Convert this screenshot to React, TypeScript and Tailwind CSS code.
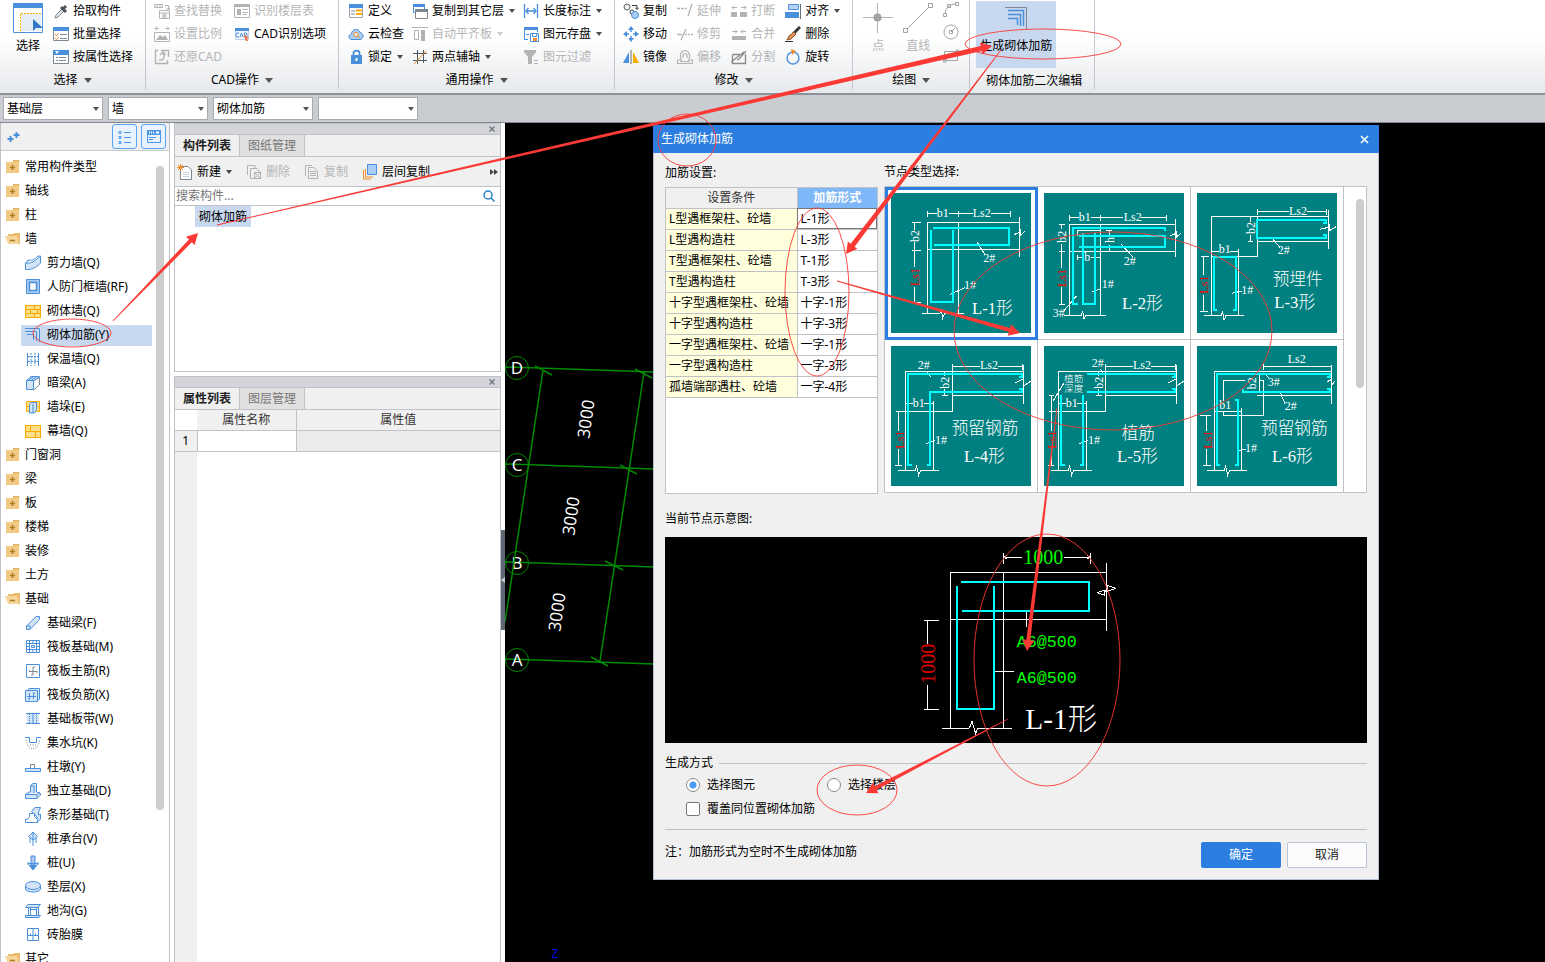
import { useState } from "react"
import type { ReactNode } from "react"

const BLUE = "#4a8fdc"
const PALE = "#d3e4f8"
const GRAY = "#b3b3b3"
const STEEL = "#7d8791"
const AMBER = "#f9ab00"
const SAND = "#ffdf8a"

/** 16x16 icon drawings, keyed by name */
const ICONS: Record<string, ReactNode> = {
  // ribbon
  pick: (
    <>
      <path d="M2 15L3 12L9 6L11 8L5 14Z" fill="#dfe6ec" stroke={STEEL} />
      <path d="M8 4L13 9M10 6L13 3" stroke="#4b5560" strokeWidth="3" />
    </>
  ),
  batch: (
    <>
      <path d="M.5 2.500H15.500V14.500H.500Z" fill="#fff" stroke={STEEL} />
      <path d="M0 1H16V5H0Z" fill={BLUE} />
      <path d="M7 8.500H14M7 12.500H14" stroke={STEEL} />
      <path d="M2 8L3.500 9.500L6 7M2 12L3.500 13.500L6 11" stroke="#f08c2a" />
    </>
  ),
  byprop: (
    <>
      <path d="M.5 2.500H15.500V14.500H.500Z" fill="#fff" stroke={STEEL} />
      <path d="M0 1H16V6H0Z" fill={BLUE} />
      <path d="M2 2H6L4 5Z" fill="#fff" />
      <path d="M3 8.500H5M6 8.500H13M3 11.500H5M6 11.500H13" stroke={STEEL} />
    </>
  ),
  findrep: (
    <>
      <path d="M0.500 1.500H8.500V4.500H.500ZM3 2V4M6 2V4M11 2.500H14.500V6M12 4.500L14.500 7L16 4.500M5.500 7.500H15.500V15.500H5.500ZM6 10H15M8 12H13M8 14H13M10 10V15" stroke={GRAY} />
    </>
  ),
  ratio: (
    <>
      <path d="M.5 6.500H15.500V15.500H.500ZM1 2.500H5M11 2.500H15M3 .500L1 2.500L3 4.500M13 .500L15 2.500L13 4.500" stroke={GRAY} />
      <path d="M2 14L6 9L9 11L11 9L14 14Z" fill={GRAY} />
    </>
  ),
  restore: <path d="M4 1.500H1.500V14.500H13.500V11M7 1.500H14.500V8M5 11C10 12 11 8 9 4M6 6L9 3L12 6" stroke={GRAY} strokeWidth="1.400" />,
  floors: (
    <>
      <path d="M.5 3.500H15.500V14.500H.500Z" stroke={GRAY} />
      <path d="M0 1H16V4H0ZM3 6H7V12H3Z" fill={GRAY} />
      <path d="M8.500 6.500H14M8.500 9.500H14M8.500 11.500H13" stroke={GRAY} />
    </>
  ),
  cadopt: (
    <>
      <path d="M1.500 3.500H14.500V13.500H1.500Z" fill="#eef4fb" stroke="#c2d3e6" />
      <path d="M1 2H15V5H1Z" fill={BLUE} />
      <path d="M5 7H3L2 8V10L3 11H5M6 11L7.500 7L9 11M10.500 7V11H12L13 10V8L12 7Z" stroke={BLUE} />
      <path d="M10 8L15 12L13 12.500L14 15L12 15L11 13Z" fill="#f2704b" />
    </>
  ),
  define: (
    <>
      <path d="M1.500 2.500H14.500V14.500H1.500Z" fill="#fff" stroke="#9aa4ae" />
      <path d="M1 1H15V5H1Z" fill={BLUE} />
      <path d="M8 7.500H14M8 11H14" stroke={AMBER} strokeWidth="2" />
      <path d="M3 8H7M3 11H7" stroke={STEEL} />
    </>
  ),
  cloud: (
    <>
      <path d="M4 13.500C0 13.500 0 8.500 3.500 8C3.500 2.500 11 2 12 6.500C16 7 16 13 12.500 13.500Z" fill="#a9cdf5" stroke={BLUE} />
      <circle cx="8" cy="8.500" r="2.200" fill="#dbe9fa" stroke="#f08c2a" />
      <path d="M9.500 10L12 12.500" stroke="#f08c2a" />
    </>
  ),
  lock: (
    <>
      <path d="M5.500 7V4C5.500 1 11.500 1 11.500 4V7" stroke={BLUE} strokeWidth="1.800" />
      <path d="M3 6H14V15H3Z" fill={BLUE} />
      <path d="M8.500 9V12" stroke="#fff" strokeWidth="2" />
    </>
  ),
  copyfloor: (
    <>
      <path d="M1.500 1.500H12.500V9.500H1.500Z" fill="#fff" stroke={BLUE} />
      <path d="M1 1H13V4H1Z" fill={BLUE} />
      <path d="M3.500 6.500H15.500V15.500H3.500Z" fill="#fff" stroke={STEEL} />
      <path d="M3 6H16V9H3Z" fill={STEEL} />
    </>
  ),
  autoslab: (
    <>
      <path d="M0 1.500H16M2.500 4.500H6.500V13.500H2.500Z" stroke={GRAY} />
      <path d="M9 4H13V15H9Z" fill={GRAY} />
    </>
  ),
  twopoint: (
    <>
      <path d="M5.500 1V15M11.500 1V14M1 4.500H15M1 11.500H15" stroke="#4f5962" />
      <path d="M2 15L14 2" stroke="#f08c2a" />
    </>
  ),
  dim: <path d="M1.500 1V15M14.500 1V15M3 8H13M5.500 5L3 8L5.500 11M10.500 5L13 8L10.500 11" stroke={BLUE} strokeWidth="1.300" />,
  savepart: (
    <>
      <path d="M14.500 6V3.500H1.500V13.500H5" stroke={BLUE} />
      <path d="M1 1H15V4H1Z" fill={BLUE} />
      <path d="M3 8.500H6M7.500 7.500H15.500V15.500H7.500ZM9.500 8V10.500H13.500V8" fill="#fff" stroke={BLUE} />
      <path d="M10 12H14V15H10Z" fill="#f08c2a" />
    </>
  ),
  filter: (
    <>
      <path d="M1 1H13V3L9 8V15H5V8L1 3Z" fill={GRAY} />
      <path d="M11 11.500H15M11 14.500H15" stroke={GRAY} />
    </>
  ),
  copy: (
    <>
      <circle cx="4" cy="4" r="3" fill="#eee" stroke="#5d666f" />
      <path d="M9 2.500H14V6M12 4.500L14 6.500L16 4.500" stroke="#333" />
      <circle cx="9" cy="9" r="2" stroke="#333" />
      <circle cx="12" cy="12" r="3.500" fill="#a8cdf6" stroke={BLUE} />
    </>
  ),
  move: (
    <>
      <path d="M8 0L11 4H5ZM8 16L11 12H5ZM0 8L4 5V11ZM16 8L12 5V11Z" fill={BLUE} />
      <path d="M8 3V6M8 10V13M3 8H6M10 8H13" stroke={BLUE} strokeWidth="1.500" />
    </>
  ),
  mirror: (
    <>
      <path d="M6 3V14H0Z" fill={BLUE} />
      <path d="M10 3V14H16Z" fill={AMBER} />
      <path d="M8 1V15" stroke="#6a727b" />
    </>
  ),
  extend: <path d="M0 5.500H3M4 5.500H7M8 5.500H10M15 1L11 13" stroke={GRAY} strokeWidth="1.300" />,
  trim: <path d="M0 8.500H5M9 3L4 14M8 8.500H10M11 8.500H13M14 8.500H16" stroke={GRAY} strokeWidth="1.300" />,
  offset: <path d="M.5 14.500H15.500V11H11.500C14 7 12 1.500 8 1.500C4 1.500 2 7 4.500 11H.500ZM3 12.500H13M6 9C5 3 11 3 10 9" stroke={GRAY} strokeWidth="1.200" />,
  breakit: (
    <>
      <path d="M0 9H6V14H0ZM9 9H16V14H9Z" fill={GRAY} />
      <path d="M1 4.500H6M10 4.500H15M3 2.500L1 4.500L3 6.500M13 2.500L15 4.500L13 6.500" stroke={GRAY} />
    </>
  ),
  merge: (
    <>
      <path d="M1 10H15V14H1Z" fill={GRAY} />
      <path d="M1 5.500H6M10 5.500H15M4 3.500L6 5.500L4 7.500M12 3.500L10 5.500L12 7.500" stroke={GRAY} />
    </>
  ),
  split: <path d="M1.500 5.500H9M1.500 5.500V14.500H14.500V5M0 13L13 3M15 2L8 10L6 11" stroke="#8a8a8a" strokeWidth="1.300" />,
  align: (
    <>
      <path d="M3.500 1.500H13.500V6.500H3.500Z" fill="#b7d4f7" stroke={BLUE} />
      <path d="M0 9H14V15H0Z" fill={BLUE} />
      <path d="M15.500 1V16" stroke="#6a727b" />
    </>
  ),
  erase: (
    <>
      <path d="M15 1L8 8" stroke="#3b3b3b" strokeWidth="3" />
      <path d="M9 6L11 8L6 13L2 14L4 10Z" fill="#e9925a" stroke="#8b5430" />
      <path d="M0 15.500H8" stroke="#333" />
    </>
  ),
  rotate: (
    <>
      <circle cx="8" cy="9" r="6" stroke={BLUE} strokeWidth="1.400" />
      <path d="M6 0L11 2L7 6Z" fill="#f08c2a" />
    </>
  ),
  // component tree
  folder: (
    <>
      <path d="M1 3H7L8 2H14V14H1Z" fill="#f0ca85" />
      <path d="M8 1.500H14V3" stroke="#e2b05a" />
      <path d="M7.500 6V11M5 8.500H10" stroke="#ad7c1e" strokeWidth="1.500" />
    </>
  ),
  folderOpen: (
    <>
      <path d="M3 3H8L9 2H15V13H3Z" fill="#e9bc6c" />
      <path d="M0 5H12L14 13H3Z" fill="#f4d49a" />
      <path d="M5 9.500H10" stroke="#ad7c1e" strokeWidth="1.500" />
    </>
  ),
  shear: <path d="M.5 8C6 9 10 6 15.500 1V8C11 13 6 15 .500 14.500ZM1 8L3 5C7 6 10 4 13 1H15" fill={PALE} stroke={BLUE} />,
  frame: (
    <>
      <path d="M1.500 .500H14.500V14.500H1.500Z" fill="#a9c9f2" stroke={BLUE} />
      <path d="M4.500 3.500H11.500V11.500H4.500Z" fill="#fff" stroke={BLUE} strokeWidth="1.500" />
    </>
  ),
  brick: <path d="M.5 2.500H15.500V14.500H.500ZM0 6.500H16M0 10.500H16M9.500 2.500V6.500M5.500 6.500V10.500M12.500 6.500V10.500M9.500 10.500V14.500" fill={SAND} stroke={AMBER} strokeWidth="1.200" />,
  rebar: <path d="M0 1.500H14.500V15M0 4.500H11.500V14M2 7.500H8.500V13" stroke={BLUE} />,
  insul: (
    <>
      <path d="M2.500 2V15M13.500 2V15" stroke={BLUE} />
      <path d="M6 2V15M10 2V15M3 5.500H13M3 10.500H13" stroke={BLUE} strokeDasharray="2 1" />
    </>
  ),
  hidden: (
    <>
      <path d="M8.500 15L14.500 10V2.500L8.500 6Z" fill="#fff" stroke={STEEL} />
      <path d="M1.500 5.500L6 1.500H14.500L9 5.500ZM4 5L8 2M6.500 5L11 2" fill={PALE} stroke={BLUE} />
      <path d="M1.500 5.500H8.500V14.500H1.500Z" fill={PALE} stroke={BLUE} />
    </>
  ),
  pier: (
    <>
      <path d="M1.500 2.500H14.500V12.500H1.500ZM1 7.500H15" fill={SAND} stroke={AMBER} />
      <path d="M4.500 5.500L6 3.500H11.500V11L9.500 14H4.500ZM8 5V14" fill={PALE} stroke={BLUE} />
    </>
  ),
  curtain: <path d="M.5 2.500H15.500V14.500H.500ZM0 8.500H16M5.500 2.500V8.500M10.500 8.500V14.500" fill={SAND} stroke={AMBER} strokeWidth="1.200" />,
  fbeam: <path d="M1.500 11L11 1.500H14.500V4.500L5 14.500H1.500ZM1.500 11H5V14" fill={PALE} stroke={BLUE} />,
  raft: <path d="M1.500 1.500H14.500V13.500H1.500ZM4.500 1V14M11.500 1V14M1 4.500H15M1 10.500H15M6.500 6.500H9.500V8.500H6.500ZM8 1V4M8 11V14M1 7.500H4M12 7.500H15" fill="#fff" stroke={BLUE} />,
  raftMain: (
    <>
      <path d="M1.500 1.500H14.500V14.500H1.500Z" fill="#fff" stroke={BLUE} />
      <path d="M8 4V12M4 8.500H12M8 4H10M6 12H8M4 7V8M12 8V10" stroke={STEEL} />
    </>
  ),
  raftNeg: (
    <>
      <path d="M2.500 3.500L4 1.500H14.500V12L12.500 14" fill={PALE} stroke={BLUE} />
      <path d="M.5 3.500H12.500V14.500H.500ZM4.500 6V12M8.500 6V12M2 9.500H11M3 12H5M8 6H10" fill={PALE} stroke={BLUE} />
    </>
  ),
  strip: (
    <>
      <path d="M2 3H14V13H2Z" fill={PALE} />
      <path d="M1 2.500H15M1 12.500H15M8 3V12" stroke={BLUE} />
      <path d="M4.500 3V12M11.500 3V12" stroke={BLUE} strokeDasharray="1 1" />
    </>
  ),
  sump: (
    <>
      <path d="M0 2.500H4.500V7.500H11.500V2.500H16" stroke={BLUE} />
      <path d="M1 5L3 11L6 13.500H10L13 11L15 5M5 10H11" stroke={STEEL} strokeDasharray="1 1.500" />
    </>
  ),
  pedestal: (
    <>
      <path d="M5.500 9V5.500H9.500V9" stroke={STEEL} />
      <path d="M.5 9.500H15.500V12.500H.500Z" fill={PALE} stroke={BLUE} />
    </>
  ),
  isolated: <path d="M5.500 9V2.500L8 .500H11.500V9L15.500 10.500V12L12 15.500H.500V11.500L4 9ZM5.500 3H9V10M1 11.500H12L15 9M12 12V15" fill={PALE} stroke={BLUE} />,
  stripf: (
    <>
      <path d="M6.500 4.500L10 .500H15.500L13.500 5V8L15.500 7V12L12 15.500V10Z" fill={PALE} stroke={BLUE} />
      <path d="M.5 15.500V12.500H2.500L4.500 9.500V6.500H9.500V9.500L12.500 12.500V15.500Z" fill="#fff" stroke={BLUE} />
    </>
  ),
  pileCap: <path d="M8 1L12.500 5.500L8 9L3.500 5.500ZM8 1V15M5 7V12M11 7V12" fill={PALE} stroke={BLUE} />,
  pile: (
    <>
      <path d="M6 1H10V9H6Z" fill="#a9c9f2" stroke={BLUE} />
      <path d="M3 7V10M13 7V10M3 8.500H13M8 15L4 10H12Z" fill={BLUE} stroke={BLUE} />
    </>
  ),
  cushion: (
    <>
      <path d="M.5 7V10C1 14 15 14 15.500 10V7" fill={PALE} stroke={BLUE} />
      <ellipse cx="8" cy="6.500" rx="7.500" ry="4" fill={PALE} stroke={BLUE} />
    </>
  ),
  trench: <path d="M.5 4.500L3 1.500H15.500L13 4.500ZM3.500 5V12M5.500 5V12M11.500 5V12M13.500 4V12M.500 12.500H15.500L14 14.500H.500ZM5.500 6.500H11" fill={PALE} stroke={BLUE} />,
  mold: <path d="M2.500 1.500H13.500V13.500H2.500ZM8 2V13M3 8.500H13M5.500 6.500V8M10.500 6.500V8" fill="#fff" stroke={BLUE} />,
  // component list toolbar
  create: (
    <>
      <path d="M3.500 2.500H11L14.500 6V15.500H3.500Z" fill="#fff" stroke={STEEL} />
      <path d="M6 8.500H12M6 10.500H12M6 12.500H12" stroke="#c9d3dc" />
      <path d="M1 1L6 6M6 1L1 6M3.500 0V7M0 3.500H7" stroke="#f08c2a" />
    </>
  ),
  remove: (
    <>
      <path d="M1.500 11V1.500H9V4M4.500 14.500V4.500H11L14 7.500V9M4.500 14.500H8" stroke={GRAY} />
      <path d="M8.500 8.500H14.500V14.500H8.500ZM9 9L14 14M14 9L9 14" stroke={GRAY} />
    </>
  ),
  duplicate: <path d="M1.500 12V1.500H8M4.500 3.500H10L13.500 7V14.500H4.500ZM6 7.500H12M6 9.500H12M6 11.500H12" stroke={GRAY} />,
  layers: (
    <>
      <path d="M1.500 6V15H9M3.500 5V13H11" stroke="#f08c2a" />
      <path d="M5.500 .500H14.500V10.500H5.500Z" fill="#a9cdf5" stroke={BLUE} />
    </>
  )
}

function Icon({ name }: { name: string }) {
  return (
    <svg viewBox="0 0 16 16" fill="none" className="size-4 shrink-0" aria-hidden="true">
      {ICONS[name]}
    </svg>
  )
}

function Caret() {
  return <span className="border-x-[3px] border-t-[4px] border-x-transparent border-t-current" />
}

type Tool = { icon: string; label: string; off?: boolean; menu?: boolean }

function ToolButton({ icon, label, off, menu }: Tool) {
  return (
    <button
      type="button"
      disabled={off}
      className="flex h-[23px] items-center gap-1 whitespace-nowrap text-black disabled:text-[#b5b5b5]">
      <Icon name={icon} />
      {label}
      {menu && (
        <span className="ml-px flex opacity-70">
          <Caret />
        </span>
      )}
    </button>
  )
}

function ToolColumns({ columns }: { columns: Tool[][] }) {
  return columns.map((tools, i) => (
    <div key={i} className="flex flex-col">
      {tools.map((tool) => (
        <ToolButton key={tool.label} {...tool} />
      ))}
    </div>
  ))
}

function RibbonGroup({ title, spacing, children }: { title: string; spacing: string; children: ReactNode }) {
  return (
    <section className="mb-1 flex flex-col border-r border-[#c4c6c9]">
      <div className={`-mt-px flex h-[72px] items-start ${spacing}`}>{children}</div>
      <div className="flex h-[18px] items-center justify-center gap-1.5">
        {title}
        <span className="border-x-4 border-t-[5px] border-x-transparent border-t-[#555]" />
      </div>
    </section>
  )
}

const SELECT_TOOLS: Tool[][] = [
  [
    { icon: "pick", label: "拾取构件" },
    { icon: "batch", label: "批量选择" },
    { icon: "byprop", label: "按属性选择" }
  ]
]

const CAD_TOOLS: Tool[][] = [
  [
    { icon: "findrep", label: "查找替换", off: true },
    { icon: "ratio", label: "设置比例", off: true },
    { icon: "restore", label: "还原CAD", off: true }
  ],
  [
    { icon: "floors", label: "识别楼层表", off: true },
    { icon: "cadopt", label: "CAD识别选项" }
  ]
]

const COMMON_TOOLS: Tool[][] = [
  [
    { icon: "define", label: "定义" },
    { icon: "cloud", label: "云检查" },
    { icon: "lock", label: "锁定", menu: true }
  ],
  [
    { icon: "copyfloor", label: "复制到其它层", menu: true },
    { icon: "autoslab", label: "自动平齐板", off: true, menu: true },
    { icon: "twopoint", label: "两点辅轴", menu: true }
  ],
  [
    { icon: "dim", label: "长度标注", menu: true },
    { icon: "savepart", label: "图元存盘", menu: true },
    { icon: "filter", label: "图元过滤", off: true }
  ]
]

const EDIT_TOOLS: Tool[][] = [
  [
    { icon: "copy", label: "复制" },
    { icon: "move", label: "移动" },
    { icon: "mirror", label: "镜像" }
  ],
  [
    { icon: "extend", label: "延伸", off: true },
    { icon: "trim", label: "修剪", off: true },
    { icon: "offset", label: "偏移", off: true }
  ],
  [
    { icon: "breakit", label: "打断", off: true },
    { icon: "merge", label: "合并", off: true },
    { icon: "split", label: "分割", off: true }
  ],
  [
    { icon: "align", label: "对齐", menu: true },
    { icon: "erase", label: "删除" },
    { icon: "rotate", label: "旋转" }
  ]
]

function Ribbon() {
  return (
    <header className="flex h-[95px] shrink-0 border-b-2 border-[#8e9197] bg-linear-to-b from-white from-40% to-[#e6e9ec]">
      <RibbonGroup title="选择" spacing="gap-[7px] pl-2.5 pr-3">
        <button type="button" className="flex w-9 flex-col items-center gap-[5px] pt-1">
          <svg viewBox="0 0 30 30" className="size-[30px]" fill="none" aria-hidden="true">
            <path d="M.5.500H29.500V29.500H.500Z" fill="#fff" stroke={BLUE} />
            <path d="M0 0H30V5H0Z" fill={BLUE} />
            <path d="M8 11H28V28H8Z" fill="#e6edf7" />
            <path d="M7.500 28V10.500H28" stroke={AMBER} strokeDasharray="2 1" />
            <path d="M20 16V28L23 25L30 25Z" fill="#3379c8" />
          </svg>
          选择
        </button>
        <ToolColumns columns={SELECT_TOOLS} />
      </RibbonGroup>

      <RibbonGroup title="CAD操作" spacing="gap-3 pl-2 pr-3">
        <ToolColumns columns={CAD_TOOLS} />
      </RibbonGroup>

      <RibbonGroup title="通用操作" spacing="gap-2 pl-[9px] pr-3">
        <ToolColumns columns={COMMON_TOOLS} />
      </RibbonGroup>

      <RibbonGroup title="修改" spacing="gap-2.5 pl-2 pr-3">
        <ToolColumns columns={EDIT_TOOLS} />
      </RibbonGroup>

      <RibbonGroup title="绘图" spacing="gap-2.5 pl-2.5 pr-2.5">
        <button type="button" disabled className="flex w-[30px] flex-col items-center gap-[5px] pt-1 text-[#b5b5b5]">
          <svg viewBox="0 0 30 30" className="size-[30px]" fill="none" aria-hidden="true">
            <path d="M14.500 0V30M0 14.500H30" stroke={GRAY} />
            <circle cx="14.500" cy="14.500" r="4" fill="#a2a2a2" />
          </svg>
          点
        </button>
        <button type="button" disabled className="flex w-[30px] flex-col items-center gap-[5px] pt-1 text-[#b5b5b5]">
          <svg viewBox="0 0 30 30" className="size-[30px]" fill="none" stroke="#a2a2a2" aria-hidden="true">
            <path d="M4 26L26 4M.500 25.500H4.500V29.500H.500ZM25.500.500H29.500V4.500H25.500Z" />
          </svg>
          直线
        </button>
        <svg viewBox="0 0 16 62" className="mt-[3px] h-[62px] w-4" fill="none" stroke="#a2a2a2" aria-label="更多绘图">
          <path d="M2 11C3 6 6 3 13 1.500M.500 11.500H3.500V14.500H.500ZM4.500 2.500H7.500V5.500H4.500ZM12.500.500H15.500V3.500H12.500Z" />
          <circle cx="8" cy="30" r="7" />
          <path d="M8 30L12 26M6.500 28.500H9.500V31.500H6.500Z" />
          <path d="M1.500 49.500H14.500V58.500H1.500ZM.500 57.500H3V60H.500ZM13 48H15.500V50.500H13Z" />
        </svg>
      </RibbonGroup>

      <section className="mb-1 flex flex-col border-r border-[#c4c6c9] pr-3 pl-1.5">
        <div className="flex h-[74px] items-start pt-px">
          <button type="button" className="flex h-[67px] w-20 flex-col items-center gap-2 bg-[#c8d8ef] pt-[5px]">
            <svg viewBox="0 0 24 24" className="size-6" fill="none" aria-hidden="true">
              <path d="M1 1.500H22.500V23" stroke={STEEL} />
              <path d="M4 4.500H19.500V20M4 8.500H16.500V20M4 12.500H13.500V19" stroke={BLUE} strokeWidth="1.500" />
            </svg>
            生成砌体加筋
          </button>
        </div>
        <div className="pl-2.5">砌体加筋二次编辑</div>
      </section>
    </header>
  )
}

function ContextBar() {
  return (
    <div className="flex h-7 shrink-0 items-center gap-[5px] border-b border-[#85888e] bg-[#c9ccd1] px-[3px]">
      {["基础层", "墙", "砌体加筋", ""].map((value, i) => (
        <div key={i} className="relative">
          <select
            aria-label={["楼层", "类别", "构件类型", "构件"][i]}
            className="block h-[23px] w-[100px] appearance-none border border-[#a9abb0] bg-white px-[3px]">
            <option>{value}</option>
          </select>
          <span className="pointer-events-none absolute top-[10px] right-1 flex text-[#555]">
            <Caret />
          </span>
        </div>
      ))}
    </div>
  )
}

type Node = { label: string; open?: boolean; children?: [string, string][] }

const TREE: Node[] = [
  { label: "常用构件类型" },
  { label: "轴线" },
  { label: "柱" },
  {
    label: "墙",
    open: true,
    children: [
      ["shear", "剪力墙(Q)"],
      ["frame", "人防门框墙(RF)"],
      ["brick", "砌体墙(Q)"],
      ["rebar", "砌体加筋(Y)"],
      ["insul", "保温墙(Q)"],
      ["hidden", "暗梁(A)"],
      ["pier", "墙垛(E)"],
      ["curtain", "幕墙(Q)"]
    ]
  },
  { label: "门窗洞" },
  { label: "梁" },
  { label: "板" },
  { label: "楼梯" },
  { label: "装修" },
  { label: "土方" },
  {
    label: "基础",
    open: true,
    children: [
      ["fbeam", "基础梁(F)"],
      ["raft", "筏板基础(M)"],
      ["raftMain", "筏板主筋(R)"],
      ["raftNeg", "筏板负筋(X)"],
      ["strip", "基础板带(W)"],
      ["sump", "集水坑(K)"],
      ["pedestal", "柱墩(Y)"],
      ["isolated", "独立基础(D)"],
      ["stripf", "条形基础(T)"],
      ["pileCap", "桩承台(V)"],
      ["pile", "桩(U)"],
      ["cushion", "垫层(X)"],
      ["trench", "地沟(G)"],
      ["mold", "砖胎膜"]
    ]
  },
  { label: "其它", open: true }
]

function Sidebar() {
  const [selected, setSelected] = useState("砌体加筋(Y)")

  return (
    <aside className="flex w-[170px] shrink-0 flex-col border-x border-[#bfc2c7] bg-white">
      <div className="flex h-7 shrink-0 items-center gap-1 border-b border-[#c9cbcf] bg-[#f0f0f0] pr-[3px] pl-1.5">
        <svg viewBox="0 0 14 14" className="mr-auto size-3.5" stroke={BLUE} strokeWidth="2" aria-hidden="true">
          <path d="M3.500 6V12M.500 9H6.500M9.500 2V8M6.500 5H12.500" />
        </svg>
        <button type="button" aria-label="列表视图" className="flex size-[25px] items-center justify-center rounded-[3px] border border-[#5aa2f2] bg-[#e8f3ff]">
          <svg viewBox="0 0 14 14" className="size-3.5" fill="none" stroke="#4c97ec" aria-hidden="true">
            <path d="M1 1.500H3V3.500H1ZM1 6.500H3V8.500H1ZM1 11.500H3V13.500H1ZM6 2.500H13M6 7.500H13M6 12.500H13" />
          </svg>
        </button>
        <button type="button" aria-label="窗口视图" className="flex size-[25px] items-center justify-center rounded-[3px] border border-[#5aa2f2] bg-[#e8f3ff]">
          <svg viewBox="0 0 14 14" className="size-3.5" fill="none" aria-hidden="true">
            <path d="M.5.500H13.500V12.500H.500Z" stroke="#4c97ec" />
            <path d="M0 0H14V5H0Z" fill="#4c97ec" />
            <path d="M2 2.500H3M4 2.500H5M6 2.500H7M9 2.500H12" stroke="#fff" strokeWidth="2" />
            <path d="M2 7.500H9M2 9.500H6" stroke="#4c97ec" />
          </svg>
        </button>
      </div>
      <div className="flex min-h-0 flex-1 pt-1">
        <ul className="min-w-0 flex-1 overflow-hidden">
          {TREE.map((node) => (
            <li key={node.label}>
              <button type="button" className="flex h-6 items-center gap-1 pl-1">
                <Icon name={node.open ? "folderOpen" : "folder"} />
                {node.label}
              </button>
              {node.children && (
                <ul>
                  {node.children.map(([icon, label]) => (
                    <li key={label} className="flex h-6 items-center pl-5">
                      <button
                        type="button"
                        onClick={() => setSelected(label)}
                        className={`flex h-[21px] w-full items-center gap-1.5 pl-1 text-left whitespace-nowrap ${
                          selected === label ? "bg-[#c8d8ef]" : ""
                        }`}>
                        <Icon name={icon} />
                        {label}
                      </button>
                    </li>
                  ))}
                </ul>
              )}
            </li>
          ))}
        </ul>
        <div className="mr-[5px] ml-1 pt-[11px]">
          <div className="h-[644px] w-2 rounded bg-[#cdcdcd]" />
        </div>
      </div>
    </aside>
  )
}

function PanelHead({ tabs }: { tabs: [string, string] }) {
  return (
    <>
      <div className="flex h-[11px] shrink-0 items-center justify-end border-b border-[#c0c2c8] bg-[#d4d5da] pr-1">
        <button type="button" aria-label="关闭面板" className="flex">
          <svg viewBox="0 0 8 8" className="size-2" stroke="#6f747a" strokeWidth="1.300" aria-hidden="true">
            <path d="M1.500 1.500L6.500 6.500M6.500 1.500L1.500 6.500" />
          </svg>
        </button>
      </div>
      <div className="flex h-[22px] shrink-0 border-b border-[#c0c2c8] bg-[#f0f0f0]">
        <button type="button" className="w-[65px] border-r border-[#c0c2c8] font-bold text-[#222]">
          {tabs[0]}
        </button>
        <button type="button" className="w-[65px] border-r border-[#c0c2c8] bg-[#e0e0e0] text-[#777]">
          {tabs[1]}
        </button>
      </div>
    </>
  )
}

function SidePanels() {
  return (
    <div className="flex w-[335px] shrink-0 bg-white pl-1">
      <div className="flex min-w-0 flex-1 flex-col gap-1">
        <section className="flex h-[249px] flex-col border border-[#c0c2c8]">
          <PanelHead tabs={["构件列表", "图纸管理"]} />
          <div className="flex h-[30px] shrink-0 items-center gap-3.5 border-b border-[#c0c2c8] bg-[#f0f0f0] px-0.5">
            <ToolButton icon="create" label="新建" menu />
            <ToolButton icon="remove" label="删除" off />
            <ToolButton icon="duplicate" label="复制" off />
            <ToolButton icon="layers" label="层间复制" />
            <svg viewBox="0 0 8 6" className="ml-auto h-1.5 w-2" fill="#444" aria-label="更多">
              <path d="M0 0L4 3L0 6ZM4 0L8 3L4 6Z" />
            </svg>
          </div>
          <label className="flex h-[19px] shrink-0 items-center border-b border-[#c0c2c8] pr-[5px] pl-px">
            <input
              type="text"
              aria-label="搜索构件"
              placeholder="搜索构件..."
              className="min-w-0 flex-1 outline-none placeholder:text-[#777]"
            />
            <svg viewBox="0 0 12 12" className="size-3" fill="none" stroke="#2586c4" strokeWidth="1.500" aria-hidden="true">
              <circle cx="5" cy="5" r="4" />
              <path d="M8 8L11.500 11.500" />
            </svg>
          </label>
          <ul className="flex-1 pl-5">
            <li className="flex h-[21px] w-fit items-center bg-[#c8d8ef] px-1">砌体加筋</li>
          </ul>
        </section>

        <section className="flex min-h-0 flex-1 flex-col border border-b-0 border-[#c0c2c8]">
          <PanelHead tabs={["属性列表", "图层管理"]} />
          <table className="w-full table-fixed border-collapse">
            <colgroup>
              <col className="w-[22px]" />
              <col className="w-[99px]" />
              <col />
            </colgroup>
            <thead>
              <tr className="h-5 border-b border-[#c0c2c8] bg-[#f0f0f0] text-[#333]">
                <th className="bg-white" />
                <th className="border-r border-[#c0c2c8] font-normal">属性名称</th>
                <th className="font-normal">属性值</th>
              </tr>
            </thead>
            <tbody>
              <tr className="h-[21px] border-b border-[#c0c2c8]">
                <td className="border-r border-[#c0c2c8] bg-[#f0f0f0] text-center">1</td>
                <td className="border-r border-[#c0c2c8]" />
                <td className="bg-[#ebebeb]" />
              </tr>
            </tbody>
          </table>
          <div className="w-[22px] flex-1 bg-[#f0f0f0]" />
        </section>
      </div>
      <div className="flex w-1 flex-col pt-[407px]">
        <button type="button" aria-label="折叠" className="flex h-[100px] items-center bg-[#5d6874]">
          <span className="border-y-[3px] border-r-[4px] border-y-transparent border-r-[#c6ccd2]" />
        </button>
      </div>
    </div>
  )
}

const AXES: [string, number][] = [
  ["D", 245],
  ["C", 342],
  ["B", 440],
  ["A", 537]
]

function AxisGrid() {
  return (
    <svg viewBox="0 0 150 839" className="block h-[839px] w-[150px] font-['Open_Sans']" fill="none" stroke="#008a00" aria-hidden="true">
      {AXES.map(([name, y]) => (
        <g key={name}>
          <circle cx="12" cy={y} r="11.500" />
          <path d={`M0 ${y - 1}L150 ${y + 4}`} strokeWidth="1.500" />
          <text x="12" y={y + 6} fill="#fff" stroke="none" fontSize="17" textAnchor="middle">
            {name}
          </text>
        </g>
      ))}
      <path d="M38 247L0 499M139 249L95 538" strokeWidth="1.500" />
      <path d="M30 243L47 252M130 246L147 255M115 342L132 351M100 438L118 447M86 534L103 543" strokeWidth="1.500" />
      {[
        [81, 296],
        [66, 393],
        [52, 489]
      ].map(([x, y]) => (
        <text key={y} transform={`translate(${x} ${y}) rotate(-82)`} y="6" fill="#fff" stroke="none" fontSize="17" textAnchor="middle">
          3000
        </text>
      ))}
      <text x="50" y="835" fill="#0000ff" stroke="none" fontSize="12" textAnchor="middle">
        Z
      </text>
    </svg>
  )
}

/** text, x, y, font size, vertical (rotated round its centre), fill */
type CadText = [string, number, number, number?, boolean?, string?]
type Detail = { name: string; box: string; lines: string; bars: string; texts: CadText[] }

// Drawn at three units per screen pixel
const DETAILS: Detail[] = [
  {
    name: "L-1形",
    box: "33 219 420 420",
    lines:
      "M142 281H170M206 281H278M332 281H391M142 272V290M235 272V290M391 272V290M142 580V307H418M418 291V410M142 388H418M235 307V580M126 580H180L184 568L188 594L194 580H252M95 307H124M103 307V330M103 365V440M95 390H124M103 500V547M95 547H124M291 366L315 404M210 523L255 503M402 344L416 338L420 326V348L434 334",
    bars: "M160 323H387V375H162M153 330V546H219V330",
    texts: [["b1", 170, 291], ["Ls2", 278, 291], ["2#", 310, 425], ["1#", 252, 508], ["b2", 105, 348, 36, true], ["Ls1", 105, 471, 36, true, "#f00"], ["L-1形", 276, 583, 50]]
  },
  {
    name: "L-2形",
    box: "492 219 420 420",
    lines:
      "M568 293H596M632 293H730M784 293H860M568 285V302M661 285V302M860 285V302M568 586V314H886M886 297V412M568 394H886M661 314V586M552 586H604L608 574L612 596L618 586H678M592 347V332H661M536 313H554M545 313V328M545 372V443M536 394H554M545 500V552M536 552H554M689 332V344M689 374V394M679 332H697M592 412H612M632 412H661M592 404V420M724 373L760 412M636 516L664 505M552 572L590 527M870 348L884 342L888 332V352L902 340",
    bars: "M855 334V323H578V552H594M597 347H855V381H597M609 338V552H645V338",
    texts: [["b1", 596, 303], ["Ls2", 731, 303], ["2#", 731, 434], ["1#", 665, 505], ["3#", 518, 590], ["h", 690, 360, 36, true], ["b", 613, 422], ["b2", 546, 350, 36, true], ["Ls1", 547, 474, 36, true, "#f00"], ["L-2形", 726, 568, 50]]
  },
  {
    name: "L-3形",
    box: "951 219 420 420",
    lines:
      "M1132 275H1226M1282 275H1340M1132 266V284M1340 266V284M995 586V290H1345M1345 270V386M1132 290V409H995M1132 364H1345M1076 386V586M972 586H1024L1028 574L1032 600L1038 586H1093M995 394H1016M1050 394H1076M964 409H986M970 409V465M970 525V573M961 573H984M1112 290V305M1112 346V364M1104 364H1120M1174 352L1200 382M1056 520L1085 513M1320 328L1345 322L1348 312V332L1368 320",
    bars: "M1328 309H1338V300H1132V353H1338V344H1328M1012 570H1001V411H1068V570H1058",
    texts: [["Ls2", 1227, 284], ["b2", 1114, 324, 36, true], ["2#", 1193, 402], ["b1", 1016, 400], ["1#", 1084, 522], ["Ls1", 973, 494, 36, true, "#f00"], ["预埋件", 1178, 496, 50], ["L-3形", 1183, 565, 50]]
  },
  {
    name: "L-4形",
    box: "33 24 420 420",
    lines:
      "M217 85H299M355 85H427M217 77V95M427 77V95M76 397V100H430M430 82V198M217 85V220H48M217 172H430M160 189V397M54 397H106L110 384L116 411L122 397H177M76 197H98M132 197H160M55 220V278M55 334V382M46 382H66M194 100V115M194 153V172M186 172H203M141 102L152 116M138 317L165 308M406 135L430 122V144L452 130",
    bars: "M416 116H426V107H84V381H95M416 154H426V162H150V381H140",
    texts: [["2#", 113, 92], ["Ls2", 300, 94], ["b2", 196, 134, 36, true], ["b1", 98, 207], ["1#", 165, 318], ["Ls1", 59, 305, 36, true, "#f00"], ["预留钢筋", 215, 288, 50], ["L-4形", 252, 373, 50]]
  },
  {
    name: "L-5形",
    box: "492 24 420 420",
    lines:
      "M676 85H758M814 85H886M676 77V95M886 77V95M535 397V100H889M889 82V198M676 85V220H507M676 172H889M619 189V397M513 397H565L569 384L575 411L581 397H636M535 197H557M591 197H619M514 172V278M507 172H522M514 334V382M505 382H522M655 100V115M655 153V172M648 172H667M520 188L552 135M660 92L670 106M597 317L624 308M865 135L889 122V144L911 130",
    bars: "M621 107H885V116H875M621 162H885V154H875M543 171V381H554M609 171V381H599",
    texts: [["2#", 635, 86], ["Ls2", 759, 94], ["植筋", 552, 133, 29], ["深度", 552, 163, 29], ["b2", 658, 134, 36, true], ["b1", 557, 207], ["1#", 624, 318], ["Ls1", 517, 305, 36, true, "#f00"], ["植筋", 725, 302, 50], ["L-5形", 711, 373, 50]]
  },
  {
    name: "L-6形",
    box: "951 24 420 420",
    lines:
      "M1150 85H1353M1150 77V95M1355 82V198M1004 397V100H1355M1132 172H1355M1030 188V127H1095M1137 127H1150V233H1030V220M1004 220H1085M1085 210V397M981 397H1033L1037 384L1043 411L1049 397H1101M960 233H993M979 233V280M979 334V382M970 382H993M1139 107V166M1155 105L1166 120M1200 162L1215 197M1077 337L1097 333M1340 132L1355 124V142L1364 130",
    bars: "M1340 116H1350V107H1011V381H1020M1340 154H1350V162H1088V154M1066 186H1074V381H1066",
    texts: [["Ls2", 1223, 75], ["3#", 1163, 144], ["b2", 1117, 136, 36, true], ["b1", 1018, 213], ["2#", 1214, 217], ["1#", 1095, 341], ["Ls1", 983, 305, 36, true, "#f00"], ["预留钢筋", 1143, 288, 50], ["L-6形", 1176, 373, 50]]
  }
]

const PREVIEW: Detail = {
  name: "当前节点示意图",
  box: "-705 21 2106 618",
  lines:
    "M310 82H366M492 82H571M310 69V101M571 69V101M152 595V127H620M620 99V302M152 268H620M310 127V595M126 595H206L210 590L216 574L227 611L233 595H336M380 244V292M284 424H342M72 271H117M82 271V342M82 466V538M72 538H117M590 188L614 180V196M590 188L614 196M648 175L622 166V184L648 175M614 188L622 172M310 82L320 77M310 82L320 87M571 82L561 77M571 82L561 87",
  bars: "M183 156H567V243H186M171 168V537H282V168",
  texts: [["1000", 370, 102, 60, false, "#0f0"], ["1000", 84, 401, 60, true, "#e00000"], ["A6@500", 350, 351, 50, false, "#0f0"], ["A6@500", 350, 459, 50, false, "#0f0"], ["L-1形", 376, 596, 88]]
}

function DetailDrawing({ detail, className }: { detail: Detail; className: string }) {
  return (
    <svg viewBox={detail.box} className={className} fill="none" role="img" aria-label={detail.name}>
      <g shapeRendering="crispEdges">
        <path d={detail.lines} stroke="#fff" strokeWidth="3" />
        <path d={detail.bars} stroke="#0ff" strokeWidth="6" />
      </g>
      <g fill="#fff" className="font-light">
        {detail.texts.map(([text, x, y, size = 36, vertical, fill], i) => (
          <text
            key={i}
            fill={fill}
            fontSize={size}
            // serif digits are half a square wide, but its @ is too broad for a bar label
            className={
              text.includes("@")
                ? "font-['Liberation_Mono',monospace]"
                : "font-['Liberation_Serif','Noto_Sans_CJK_SC',serif]"
            }
            transform={vertical ? `translate(${x + size / 3} ${y}) rotate(-90)` : `translate(${x} ${y})`}
            textAnchor={vertical ? "middle" : "start"}>
            {text}
          </text>
        ))}
      </g>
    </svg>
  )
}

const SETTINGS: [string, string][] = [
  ["L型遇框架柱、砼墙", "L-1形"],
  ["L型遇构造柱", "L-3形"],
  ["T型遇框架柱、砼墙", "T-1形"],
  ["T型遇构造柱", "T-3形"],
  ["十字型遇框架柱、砼墙", "十字-1形"],
  ["十字型遇构造柱", "十字-3形"],
  ["一字型遇框架柱、砼墙", "一字-1形"],
  ["一字型遇构造柱", "一字-3形"],
  ["孤墙端部遇柱、砼墙", "一字-4形"]
]

function SettingsTable() {
  return (
    <div className="h-[307px] w-[213px] border border-[#c0c2c8] bg-white">
      <table className="w-full table-fixed border-collapse">
        <thead>
          <tr className="h-5 border-b border-[#c0c2c8]">
            <th className="w-[131px] border-r border-[#c0c2c8] bg-[#f0f0f0] font-normal text-[#333]">设置条件</th>
            <th className="bg-[#7fb8f8] text-white">加筋形式</th>
          </tr>
        </thead>
        <tbody>
          {SETTINGS.map(([condition, form], i) => (
            <tr key={condition} className="h-[21px] border-b border-[#c0c2c8]">
              <td className="border-r border-[#c0c2c8] bg-[#ffffdc] pl-[3px] whitespace-nowrap">{condition}</td>
              <td className={i === 0 ? "pl-[3px] outline-1 -outline-offset-1 outline-[#777]" : "pl-[3px]"}>{form}</td>
            </tr>
          ))}
        </tbody>
      </table>
    </div>
  )
}

function RebarDialog() {
  const [picked, setPicked] = useState(0)
  const [mode, setMode] = useState("选择图元")

  return (
    <div
      role="dialog"
      aria-labelledby="dialog-title"
      className="absolute top-0.5 left-[148px] flex w-[726px] flex-col border border-[#b4c0d0] bg-[#f0f0f0]">
      <div className="-m-px flex h-7 items-center justify-between bg-[#2c7fe1] px-2 text-white">
        <h2 id="dialog-title">生成砌体加筋</h2>
        <button type="button" aria-label="关闭" className="flex px-0.5">
          <svg viewBox="0 0 9 9" className="size-[9px]" stroke="#fff" strokeWidth="1.600" aria-hidden="true">
            <path d="M1 1L8 8M8 1L1 8" />
          </svg>
        </button>
      </div>

      <div className="flex flex-col px-[11px] pt-3 pb-[11px]">
        <div className="flex gap-1.5">
          <div className="flex flex-col gap-1.5 pt-px">
            <p>加筋设置:</p>
            <SettingsTable />
          </div>
          <div className="flex flex-1 flex-col gap-1.5">
            <p>节点类型选择:</p>
            <div className="flex h-[307px] justify-between border border-[#c0c2c8] bg-white">
              <div className="grid grid-cols-[repeat(3,153px)] content-start">
                {DETAILS.map((detail, i) => (
                  <button
                    key={detail.name}
                    type="button"
                    onClick={() => setPicked(i)}
                    className={`flex size-[153px] items-center justify-center border-r border-b border-[#c0c2c8] ${
                      picked === i ? "outline-3 -outline-offset-3 outline-[#2c7fe1]" : ""
                    }`}>
                    <DetailDrawing detail={detail} className="size-[140px] shrink-0 bg-[#008080]" />
                  </button>
                ))}
              </div>
              <div className="mt-3 mr-0.5 h-[189px] w-2 rounded bg-[#cdcdcd]" />
            </div>
          </div>
        </div>

        <p className="mt-[17px]">当前节点示意图:</p>
        <div className="mt-2.5 bg-black">
          <DetailDrawing detail={PREVIEW} className="block h-[206px] w-full" />
        </div>

        <fieldset className="mt-3 flex flex-col">
          <legend className="flex w-full items-center gap-1.5 after:h-px after:flex-1 after:bg-[#c0c2c8]">生成方式</legend>
          <div className="mt-1.5 flex flex-col gap-2 pl-[21px]">
            <div className="flex gap-[72px]">
              {["选择图元", "选择楼层"].map((option) => (
                <label key={option} className="flex items-center gap-[7px]">
                  <input
                    type="radio"
                    name="mode"
                    checked={mode === option}
                    onChange={() => setMode(option)}
                    className="size-3.5 appearance-none rounded-full border border-[#8a8a8a] bg-white checked:bg-[radial-gradient(circle,#4a9bf5_3px,white_4px)]"
                  />
                  {option}
                </label>
              ))}
            </div>
            <label className="flex items-center gap-[7px]">
              <input type="checkbox" className="size-3.5 appearance-none rounded-xs border border-[#777] bg-white checked:bg-[#4a9bf5]" />
              覆盖同位置砌体加筋
            </label>
          </div>
        </fieldset>

        <div className="mt-3 flex justify-between border-t border-[#c0c2c8] pt-3">
          <p className="pt-0.5">注：加筋形式为空时不生成砌体加筋</p>
          <div className="flex gap-1.5">
            <button type="button" className="h-[26px] w-20 rounded-xs bg-[#2c7fe1] text-white">
              确定
            </button>
            <button type="button" className="h-[26px] w-20 rounded-xs border border-[#b9c4d6] bg-[#fcfcfc] text-[#222]">
              取消
            </button>
          </div>
        </div>
      </div>
    </div>
  )
}

const RED = "#fb3a36"

// cx, cy, rx, ry
const RINGS = [
  [1043, 44, 78, 15],
  [72, 333, 39, 14],
  [687, 140, 29, 26],
  [817, 292, 32, 84],
  [1113, 331, 159, 99],
  [1047, 660, 73, 126],
  [857, 790, 40, 25]
]

// x1, y1, x2, y2, shaft width at the head
const ARROWS = [
  [113, 321, 198, 233, 4],
  [217, 225, 992, 46, 5],
  [1001, 50, 846, 254, 5],
  [837, 281, 1020, 333, 4],
  [1057, 408, 1027, 651, 4],
  [1008, 719, 866, 793, 4]
]

/** Shaft that widens from its tail towards the head */
function Arrow({ points: [x1, y1, x2, y2, width] }: { points: number[] }) {
  const length = Math.hypot(x2 - x1, y2 - y1)
  const angle = (Math.atan2(y2 - y1, x2 - x1) * 180) / Math.PI
  const neck = length - 11
  const half = width / 2
  return (
    <path
      fill={RED}
      transform={`translate(${x1} ${y1}) rotate(${angle})`}
      d={`M0 -.4L${neck} ${-half}V-6L${length} 0L${neck} 6V${half}L0 .4Z`}
    />
  )
}

function Markup() {
  return (
    <svg className="pointer-events-none absolute inset-0 size-full" fill="none" stroke="none" aria-hidden="true">
      {RINGS.map(([cx, cy, rx, ry]) => (
        <ellipse key={cx} cx={cx} cy={cy} rx={rx} ry={ry} stroke={RED} strokeWidth="0.900" />
      ))}
      {ARROWS.map((points) => (
        <Arrow key={points[0]} points={points} />
      ))}
    </svg>
  )
}

export default function App() {
  return (
    <div className="relative flex h-screen flex-col overflow-hidden bg-white font-['Noto_Sans','Noto_Sans_CJK_SC',sans-serif] text-xs text-black">
      <Ribbon />
      <ContextBar />
      <div className="flex min-h-0 flex-1">
        <Sidebar />
        <SidePanels />
        <main className="relative min-w-0 flex-1 overflow-hidden bg-black">
          <AxisGrid />
          <RebarDialog />
        </main>
      </div>
      <Markup />
    </div>
  )
}
